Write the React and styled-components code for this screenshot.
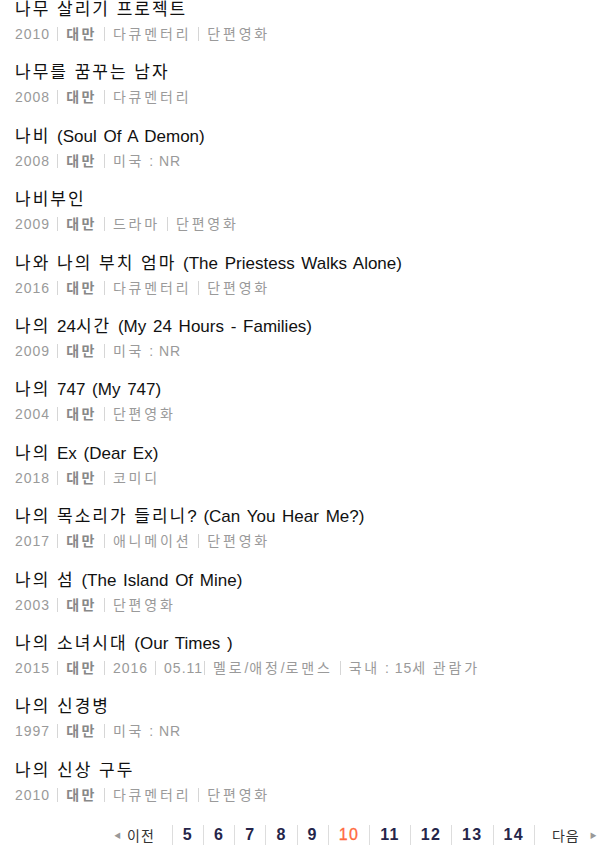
import React from "react"
import styled, { createGlobalStyle } from "styled-components"

const GlobalStyle = createGlobalStyle`
  body {
    margin: 0;
    background: #fff;
    font-family: "Liberation Sans", "Noto Sans CJK KR", sans-serif;
  }
`

const movies = [
  { title: "나무 살리기 프로젝트", year: "2010", info: ["다큐멘터리", "단편영화"] },
  { title: "나무를 꿈꾸는 남자", year: "2008", info: ["다큐멘터리"] },
  { title: "나비 (Soul Of A Demon)", year: "2008", info: ["미국 : NR"] },
  { title: "나비부인", year: "2009", info: ["드라마", "단편영화"] },
  { title: "나와 나의 부치 엄마 (The Priestess Walks Alone)", year: "2016", info: ["다큐멘터리", "단편영화"] },
  { title: "나의 24시간 (My 24 Hours - Families)", year: "2009", info: ["미국 : NR"] },
  { title: "나의 747 (My 747)", year: "2004", info: ["단편영화"] },
  { title: "나의 Ex (Dear Ex)", year: "2018", info: ["코미디"] },
  { title: "나의 목소리가 들리니? (Can You Hear Me?)", year: "2017", info: ["애니메이션", "단편영화"] },
  { title: "나의 섬 (The Island Of Mine)", year: "2003", info: ["단편영화"] },
  { title: "나의 소녀시대 (Our Times )", year: "2015", info: ["2016", "05.11", "멜로/애정/로맨스", "국내 : 15세 관람가"], tight: 3 },
  { title: "나의 신경병", year: "1997", info: ["미국 : NR"] },
  { title: "나의 신상 구두", year: "2010", info: ["다큐멘터리", "단편영화"] },
]

const pages = [5, 6, 7, 8, 9, 10, 11, 12, 13, 14]
const current = 10

const spaced = text =>
  text
    .split(/([가-힣]+)/)
    .filter(Boolean)
    .map((run, i) => (/[가-힣]/.test(run) ? <Hangul key={i}>{run}</Hangul> : run))

export default function App() {
  return (
    <Page>
      <GlobalStyle />
      <List>
        {movies.map(m => (
          <Item key={m.title}>
            <Title>{spaced(m.title)}</Title>
            <Meta>
              <span>{m.year}</span>
              <Bar />
              <Country>
                <Hangul>대만</Hangul>
              </Country>
              {m.info.map((txt, i) => (
                <React.Fragment key={i}>
                  <Bar tight={m.tight === i + 1} />
                  <span>{spaced(txt)}</span>
                </React.Fragment>
              ))}
            </Meta>
          </Item>
        ))}
      </List>
      <Pager>
        <Prev>
          <Arrow>◀</Arrow>
          <Hangul>이전</Hangul>
        </Prev>
        {pages.map(p => (
          <PageLink key={p} active={p === current}>
            {p}
          </PageLink>
        ))}
        <Next>
          <Hangul>다음</Hangul>
          <Arrow>▶</Arrow>
        </Next>
      </Pager>
    </Page>
  )
}

// styled components

const Page = styled.div`
  width: 613px;
  height: 856px;
  overflow: hidden;
`

const List = styled.ul`
  list-style: none;
  margin: 0;
  padding: 0 0 0 15px;
`

const Item = styled.li`
  height: 63.4px;
`

const Hangul = styled.span`
  letter-spacing: 2px;
`

const Title = styled.div`
  font-size: 17px;
  line-height: 20px;
  color: #111;
  word-spacing: 2px;
  white-space: nowrap;
`

const Meta = styled.div`
  display: flex;
  align-items: center;
  margin-top: 5px;
  font-size: 14px;
  line-height: 18px;
  letter-spacing: 1px;
  color: #9a9a9a;
  white-space: nowrap;

  ${Hangul} {
    letter-spacing: 2.8px;
  }
`

const Country = styled.span`
  font-weight: bold;
  color: #888;

  ${Hangul} {
    letter-spacing: 2.5px;
  }
`

const Bar = styled.i`
  display: inline-block;
  flex: none;
  width: 1px;
  height: 14px;
  background: #d6d6d6;
  margin: ${props => (props.tight ? "0 8px 0 1px" : "0 8px 0 7px")};
`

const Pager = styled.div`
  display: flex;
  align-items: center;
  height: 20px;
  margin-top: 1px;
  padding-left: 110px;
  font-size: 14px;
  color: #333;

  ${Hangul} {
    letter-spacing: 1px;
  }
`

const Arrow = styled.span`
  font-size: 7px;
  color: #999;
  margin: 0 6px 0 4px;
`

const Prev = styled.span`
  display: flex;
  align-items: center;
  padding-right: 17px;
`

const PageLink = styled.a`
  display: flex;
  align-items: center;
  height: 20px;
  padding: 0 10px;
  border-left: 1px solid #ddd;
  font-size: 16px;
  font-weight: bold;
  letter-spacing: 1.3px;
  color: ${props => (props.active ? "#ff6a3d" : "#25254a")};
  ${props => props.active && "font-weight: normal; -webkit-text-stroke: 0.3px #ff6a3d;"}
`

const Next = styled.span`
  display: flex;
  align-items: center;
  height: 20px;
  padding-left: 17px;
  border-left: 1px solid #ddd;

  ${Arrow} {
    margin: 0 0 0 10px;
  }
`
